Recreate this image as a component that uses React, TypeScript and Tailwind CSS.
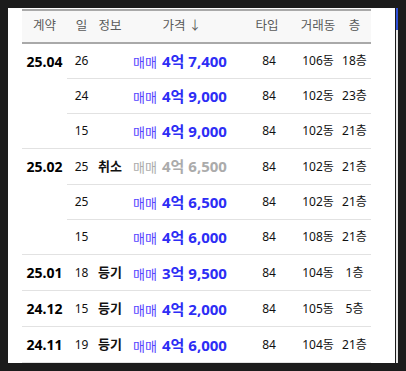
type Row = {
  date?: string;
  span?: number;
  day: string;
  info?: string;
  eok: string;
  man: string;
  type: string;
  dong: string;
  floor: string;
  cancel?: boolean;
};

const ROWS: Row[] = [
  { date: "25.04", span: 3, day: "26", eok: "4억", man: "7,400", type: "84", dong: "106동", floor: "18층" },
  { day: "24", eok: "4억", man: "9,000", type: "84", dong: "102동", floor: "23층" },
  { day: "15", eok: "4억", man: "9,000", type: "84", dong: "102동", floor: "21층" },
  { date: "25.02", span: 3, day: "25", info: "취소", eok: "4억", man: "6,500", type: "84", dong: "102동", floor: "21층", cancel: true },
  { day: "25", eok: "4억", man: "6,500", type: "84", dong: "102동", floor: "21층" },
  { day: "15", eok: "4억", man: "6,000", type: "84", dong: "108동", floor: "21층" },
  { date: "25.01", span: 1, day: "18", info: "등기", eok: "3억", man: "9,500", type: "84", dong: "104동", floor: "1층" },
  { date: "24.12", span: 1, day: "15", info: "등기", eok: "4억", man: "2,000", type: "84", dong: "105동", floor: "5층" },
  { date: "24.11", span: 1, day: "19", info: "등기", eok: "4억", man: "6,000", type: "84", dong: "104동", floor: "21층" },
];

const font = "font-['Noto_Sans','Noto_Sans_CJK_KR',sans-serif]";

export default function App() {
  return (
    <div className={`w-[406px] h-[371px] bg-[#1c1c1c] flex pt-[8px] pl-[8px] ${font}`}>
      <div className="w-[387px] h-[355px] bg-white overflow-hidden pl-[14px] pt-[1px]">
        <table className="w-[349px] table-fixed border-collapse text-center">
          <colgroup>
            <col className="w-[45px]" />
            <col className="w-[29px]" />
            <col className="w-[28px]" />
            <col className="w-[112px]" />
            <col className="w-[62px]" />
            <col className="w-[40px]" />
            <col className="w-[33px]" />
          </colgroup>
          <thead>
            <tr className="h-[33px] bg-[#f8f8f8] text-[12.5px] text-[#5a5a5a] font-normal">
              <th className="font-normal border-t-2 border-b-2 border-[#a9a9a9]">계약</th>
              <th className="font-normal border-t-2 border-b-2 border-[#a9a9a9]">일</th>
              <th className="font-normal border-t-2 border-b-2 border-[#a9a9a9] whitespace-nowrap">정보</th>
              <th className="font-normal border-t-2 border-b-2 border-[#a9a9a9] pl-[4px]">가격 ↓</th>
              <th className="font-normal border-t-2 border-b-2 border-[#a9a9a9]">타입</th>
              <th className="font-normal border-t-2 border-b-2 border-[#a9a9a9] whitespace-nowrap">거래동</th>
              <th className="font-normal border-t-2 border-b-2 border-[#a9a9a9]">층</th>
            </tr>
          </thead>
          <tbody>
            {ROWS.map((r, i) => (
              <tr key={i} className="h-[35.3px] text-[12px] text-[#111]">
                {r.date && (
                  <td rowSpan={r.span} className="align-top p-0 border-b border-[#e2e2e2] text-[14px] font-bold text-black">
                    <div className="h-[35px] flex items-center justify-center">{r.date}</div>
                  </td>
                )}
                <td className="border-b border-[#e2e2e2]">{r.day}</td>
                <td className="border-b border-[#e2e2e2] text-[13px] font-bold whitespace-nowrap">{r.info}</td>
                <td className="border-b border-[#e2e2e2] whitespace-nowrap">
                  <span className={`text-[13px] ${r.cancel ? "text-[#ababab]" : "text-[#5544ff]"}`}>매매</span>
                  <span className={`ml-[5px] text-[15px] font-bold ${r.cancel ? "text-[#ababab]" : "text-[#2d2df5]"}`}>
                    {r.eok} {r.man}
                  </span>
                </td>
                <td className="border-b border-[#e2e2e2] pl-[4px]">{r.type}</td>
                <td className="border-b border-[#e2e2e2] whitespace-nowrap">{r.dong}</td>
                <td className="border-b border-[#e2e2e2] whitespace-nowrap">{r.floor}</td>
              </tr>
            ))}
          </tbody>
        </table>
      </div>
      <div className="ml-[1px] w-[2px] h-[355px] flex flex-col">
        <div className="h-[22px] bg-[#2f4fd6]" />
        <div className="flex-1 bg-[#e6e6e6]" />
      </div>
    </div>
  );
}
